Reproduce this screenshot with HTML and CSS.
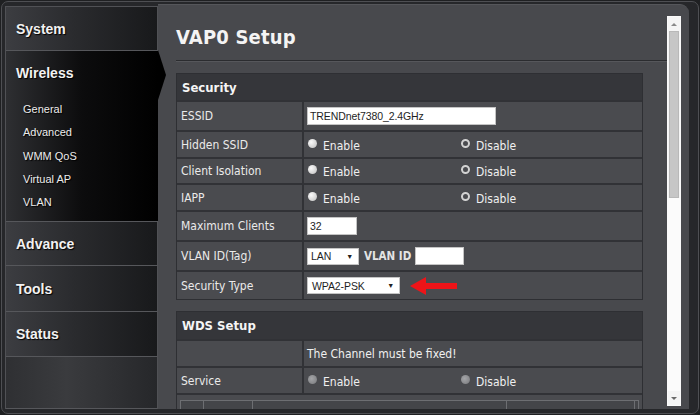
FILE: index.html
```html
<!DOCTYPE html>
<html>
<head>
<meta charset="utf-8">
<link rel="stylesheet" href="styles.css">
</head>
<body>
<div class="app">
  <nav class="side">
    <div class="nav-item sys"><span class="nav-label">System</span></div>
    <div class="nav-item active">
      <div class="nav-head"><span class="nav-label">Wireless</span></div>
      <ul class="sub">
        <li>General</li>
        <li>Advanced</li>
        <li>WMM QoS</li>
        <li>Virtual AP</li>
        <li>VLAN</li>
      </ul>
    </div>
    <div class="nav-item adv"><span class="nav-label">Advance</span></div>
    <div class="nav-item tools"><span class="nav-label">Tools</span></div>
    <div class="nav-item stat"><span class="nav-label">Status</span></div>
    <div class="nav-item empty"></div>
  </nav>

  <main class="panel">
    <div class="content">
      <h1 class="title">VAP0 Setup</h1>
      <div class="rule"></div>

      <section class="tbl">
        <div class="th">Security</div>
        <div class="tr h28">
          <div class="lbl">ESSID</div>
          <div class="val"><span class="input essid">TRENDnet7380_2.4GHz</span></div>
        </div>
        <div class="tr h25">
          <div class="lbl">Hidden SSID</div>
          <div class="val">
            <span class="opt"><i class="radio"></i>Enable</span>
            <span class="opt"><i class="radio on"></i>Disable</span>
          </div>
        </div>
        <div class="tr h24">
          <div class="lbl">Client Isolation</div>
          <div class="val">
            <span class="opt"><i class="radio"></i>Enable</span>
            <span class="opt"><i class="radio on"></i>Disable</span>
          </div>
        </div>
        <div class="tr h25">
          <div class="lbl">IAPP</div>
          <div class="val">
            <span class="opt"><i class="radio"></i>Enable</span>
            <span class="opt"><i class="radio on"></i>Disable</span>
          </div>
        </div>
        <div class="tr h28">
          <div class="lbl">Maximum Clients</div>
          <div class="val"><span class="input maxc">32</span></div>
        </div>
        <div class="tr h28">
          <div class="lbl">VLAN ID(Tag)</div>
          <div class="val">
            <span class="select lan">LAN<b class="caret">&#9660;</b></span>
            <span class="vlan-id">VLAN ID</span>
            <span class="input vid"></span>
          </div>
        </div>
        <div class="tr h27">
          <div class="lbl">Security Type</div>
          <div class="val">
            <span class="select wpa">WPA2-PSK<b class="caret">&#9660;</b></span>
            <svg class="red-arrow" width="48" height="18" viewBox="0 0 48 18"><polygon points="0,9 16,0 16,6 47,6 47,12 16,12 16,18" fill="#ee1418"/></svg>
          </div>
        </div>
      </section>

      <section class="tbl wds">
        <div class="th h27">WDS Setup</div>
        <div class="tr h25">
          <div class="lbl"></div>
          <div class="val">The Channel must be fixed!</div>
        </div>
        <div class="tr h25">
          <div class="lbl">Service</div>
          <div class="val">
            <span class="opt"><i class="radio dis"></i>Enable</span>
            <span class="opt"><i class="radio dis"></i>Disable</span>
          </div>
        </div>
        <div class="tr-full">
          <div class="mini">
            <span class="mc c1"></span><span class="mc c2"></span><span class="mc c3"></span><span class="mc c4"></span><span class="mc c5"></span>
          </div>
        </div>
      </section>
    </div>

    <div class="scroll">
      <div class="sb-btn"><span class="tri up"></span></div>
      <div class="sb-thumb"></div>
      <div class="sb-track"></div>
      <div class="sb-btn"><span class="tri down"></span></div>
    </div>
  </main>
</div>
</body>
</html>
```

FILE: styles.css
```css
* { box-sizing: border-box; }

html, body {
  margin: 0;
  padding: 0;
  width: 700px;
  height: 415px;
  overflow: hidden;
  background: #1f2022;
}

.app {
  margin: 1px;
  height: 413px;
  border: 1px solid #4e4f53;
  border-radius: 7px;
  background: #26272a;
  display: flex;
  padding: 2px 9px 4px 3px;
}

/* ---------- sidebar ---------- */
.side {
  position: relative;
  z-index: 2;
  width: 153px;
  margin-top: 2px;
  display: flex;
  flex-direction: column;
  border-top: 1px solid #505155;
  border-left: 1px solid #505155;
  font-family: "Liberation Sans", Arial, sans-serif;
  color: #f2f2f2;
}

.nav-item {
  border-bottom: 1px solid #56575b;
  border-right: 1px solid #505155;
  background: linear-gradient(to right, #3c3d41 0%, #2a2b2e 45%, #18191b 100%);
  display: flex;
  align-items: center;
  padding-left: 10px;
}

.nav-label {
  font-size: 14px;
  font-weight: bold;
  text-shadow: 1px 1px 1px #000;
}

.sys { height: 44px; }
.adv { height: 44px; }
.tools { height: 46px; }
.stat { height: 45px; }
.empty {
  flex: 1;
  background: linear-gradient(to right, #2f3033 0%, #3a3b3e 40%, #26272a 100%);
}

.nav-item.active {
  position: relative;
  height: 171px;
  display: block;
  padding-left: 0;
  border-right: none;
  background: linear-gradient(to right, #2e2f32 0%, #0c0c0d 50%, #000 100%);
}

.nav-item.active::after {
  content: "";
  position: absolute;
  right: -8px;
  top: -1px;
  border-left: 8px solid #000;
  border-top: 25px solid transparent;
  border-bottom: 25px solid transparent;
}

.nav-head {
  height: 44px;
  display: flex;
  align-items: center;
  padding-left: 10px;
}

.sub {
  list-style: none;
  margin: 0;
  padding: 3px 0 0 17px;
}

.sub li {
  font-size: 11px;
  line-height: 23.3px;
  color: #ececec;
  text-shadow: 1px 1px 1px #000;
}

/* ---------- panel ---------- */
.panel {
  flex: 1;
  display: flex;
  background: #48494d;
  border-radius: 0 9px 0 0;
  border-top: 1px solid #55565a;
  overflow: hidden;
}

.content {
  flex: 1;
  padding-left: 18px;
  overflow: hidden;
  font-family: "DejaVu Sans Condensed", "DejaVu Sans", sans-serif;
  font-stretch: condensed;
  color: #ececec;
}

.title {
  margin: 20px 0 0 0;
  font-size: 20px;
  line-height: 24px;
  font-weight: bold;
  color: #f4f4f4;
  letter-spacing: 0.2px;
}

.rule {
  margin-top: 11px;
  height: 2px;
  background: #2b2c2f;
  border-bottom: 1px solid #56575b;
}

.tbl {
  margin-top: 11px;
  width: 467px;
  display: flex;
  flex-direction: column;
  gap: 2px;
  background: #313236;
  border: 1px solid #2e2f33;
}

.th {
  height: 26px;
  background: #35363a;
  display: flex;
  align-items: center;
  padding-left: 5px;
  font-size: 13px;
  font-weight: bold;
  color: #f5f5f5;
}

.th.h27 { height: 27px; }

.tr {
  display: grid;
  grid-template-columns: 125px 1fr;
  column-gap: 2px;
}

.h24 { height: 24px; }
.h25 { height: 25px; }
.h27 { height: 27px; }
.h28 { height: 28px; }

.lbl, .val {
  background: #4a4b4f;
  display: flex;
  align-items: center;
  font-size: 12px;
}

.lbl {
  padding-left: 4px;
  color: #eaeaea;
}

.val {
  padding-left: 3px;
  color: #f0f0f0;
}

.opt {
  display: flex;
  align-items: center;
  width: 153px;
  padding-top: 2px;
}

.radio {
  display: inline-block;
  flex: none;
  width: 9px;
  height: 9px;
  border-radius: 50%;
  margin: -5px 6px 0 1px;
  background: radial-gradient(circle at 35% 35%, #fafafa 0%, #c9c9c9 80%);
}

.radio.on {
  background: #4a4b4f;
  border: 2.5px solid #d2d2d2;
}

.radio.dis {
  background: radial-gradient(circle at 40% 40%, #a4a5a8 0%, #7f8083 85%);
}

.input, .select {
  display: inline-flex;
  align-items: center;
  height: 18px;
  background: #fff;
  border: 1px solid #c4c4c4;
  font-family: "Liberation Sans", Arial, sans-serif;
  font-size: 10.5px;
  color: #1e1e1e;
  padding-left: 2px;
  letter-spacing: -0.1px;
}

.essid { width: 189px; }
.maxc { width: 50px; }
.vid { width: 49px; }

.select {
  justify-content: space-between;
  padding: 0 5px 0 3px;
}

.lan { width: 52px; height: 17px; }
.wpa { width: 93px; height: 17px; padding-left: 4px; }

.caret {
  font-size: 7px;
  color: #222;
}

.vlan-id {
  margin: 0 4px 0 5px;
  font-weight: bold;
  font-size: 11.5px;
  color: #e4e4e4;
}

.red-arrow {
  margin-left: 10px;
  margin-top: 1px;
}

.tr-full {
  height: 26px;
  background: #4a4b4f;
  padding: 5px 3px 0 3px;
}

.mini {
  display: flex;
  height: 14px;
  border-top: 1px solid #6d6e72;
  border-left: 1px solid #6d6e72;
}

.mc {
  border-right: 1px solid #6d6e72;
  background: #444549;
}

.c1 { width: 23px; }
.c2 { width: 49px; }
.c3 { width: 254px; }
.c4 { width: 128px; }
.c5 { flex: 1; }

/* ---------- scrollbar ---------- */
.scroll {
  width: 14px;
  margin: 11px 8px 3px 0;
  background: #f5f5f5;
  border: 1px solid #fafafa;
  display: flex;
  flex-direction: column;
}

.sb-btn {
  height: 14px;
  display: flex;
  align-items: center;
  justify-content: center;
}

.tri {
  width: 0;
  height: 0;
  border-left: 3px solid transparent;
  border-right: 3px solid transparent;
}

.tri.up { border-bottom: 3px solid #8a8a8a; }
.tri.down { border-top: 3px solid #6a6a6a; }

.sb-thumb {
  height: 167px;
  margin: 0 1px;
  background: #c6c6c6;
  border: 1px solid #b8b8b8;
}

.sb-track {
  flex: 1;
  background: #fbfbfb;
}
```
